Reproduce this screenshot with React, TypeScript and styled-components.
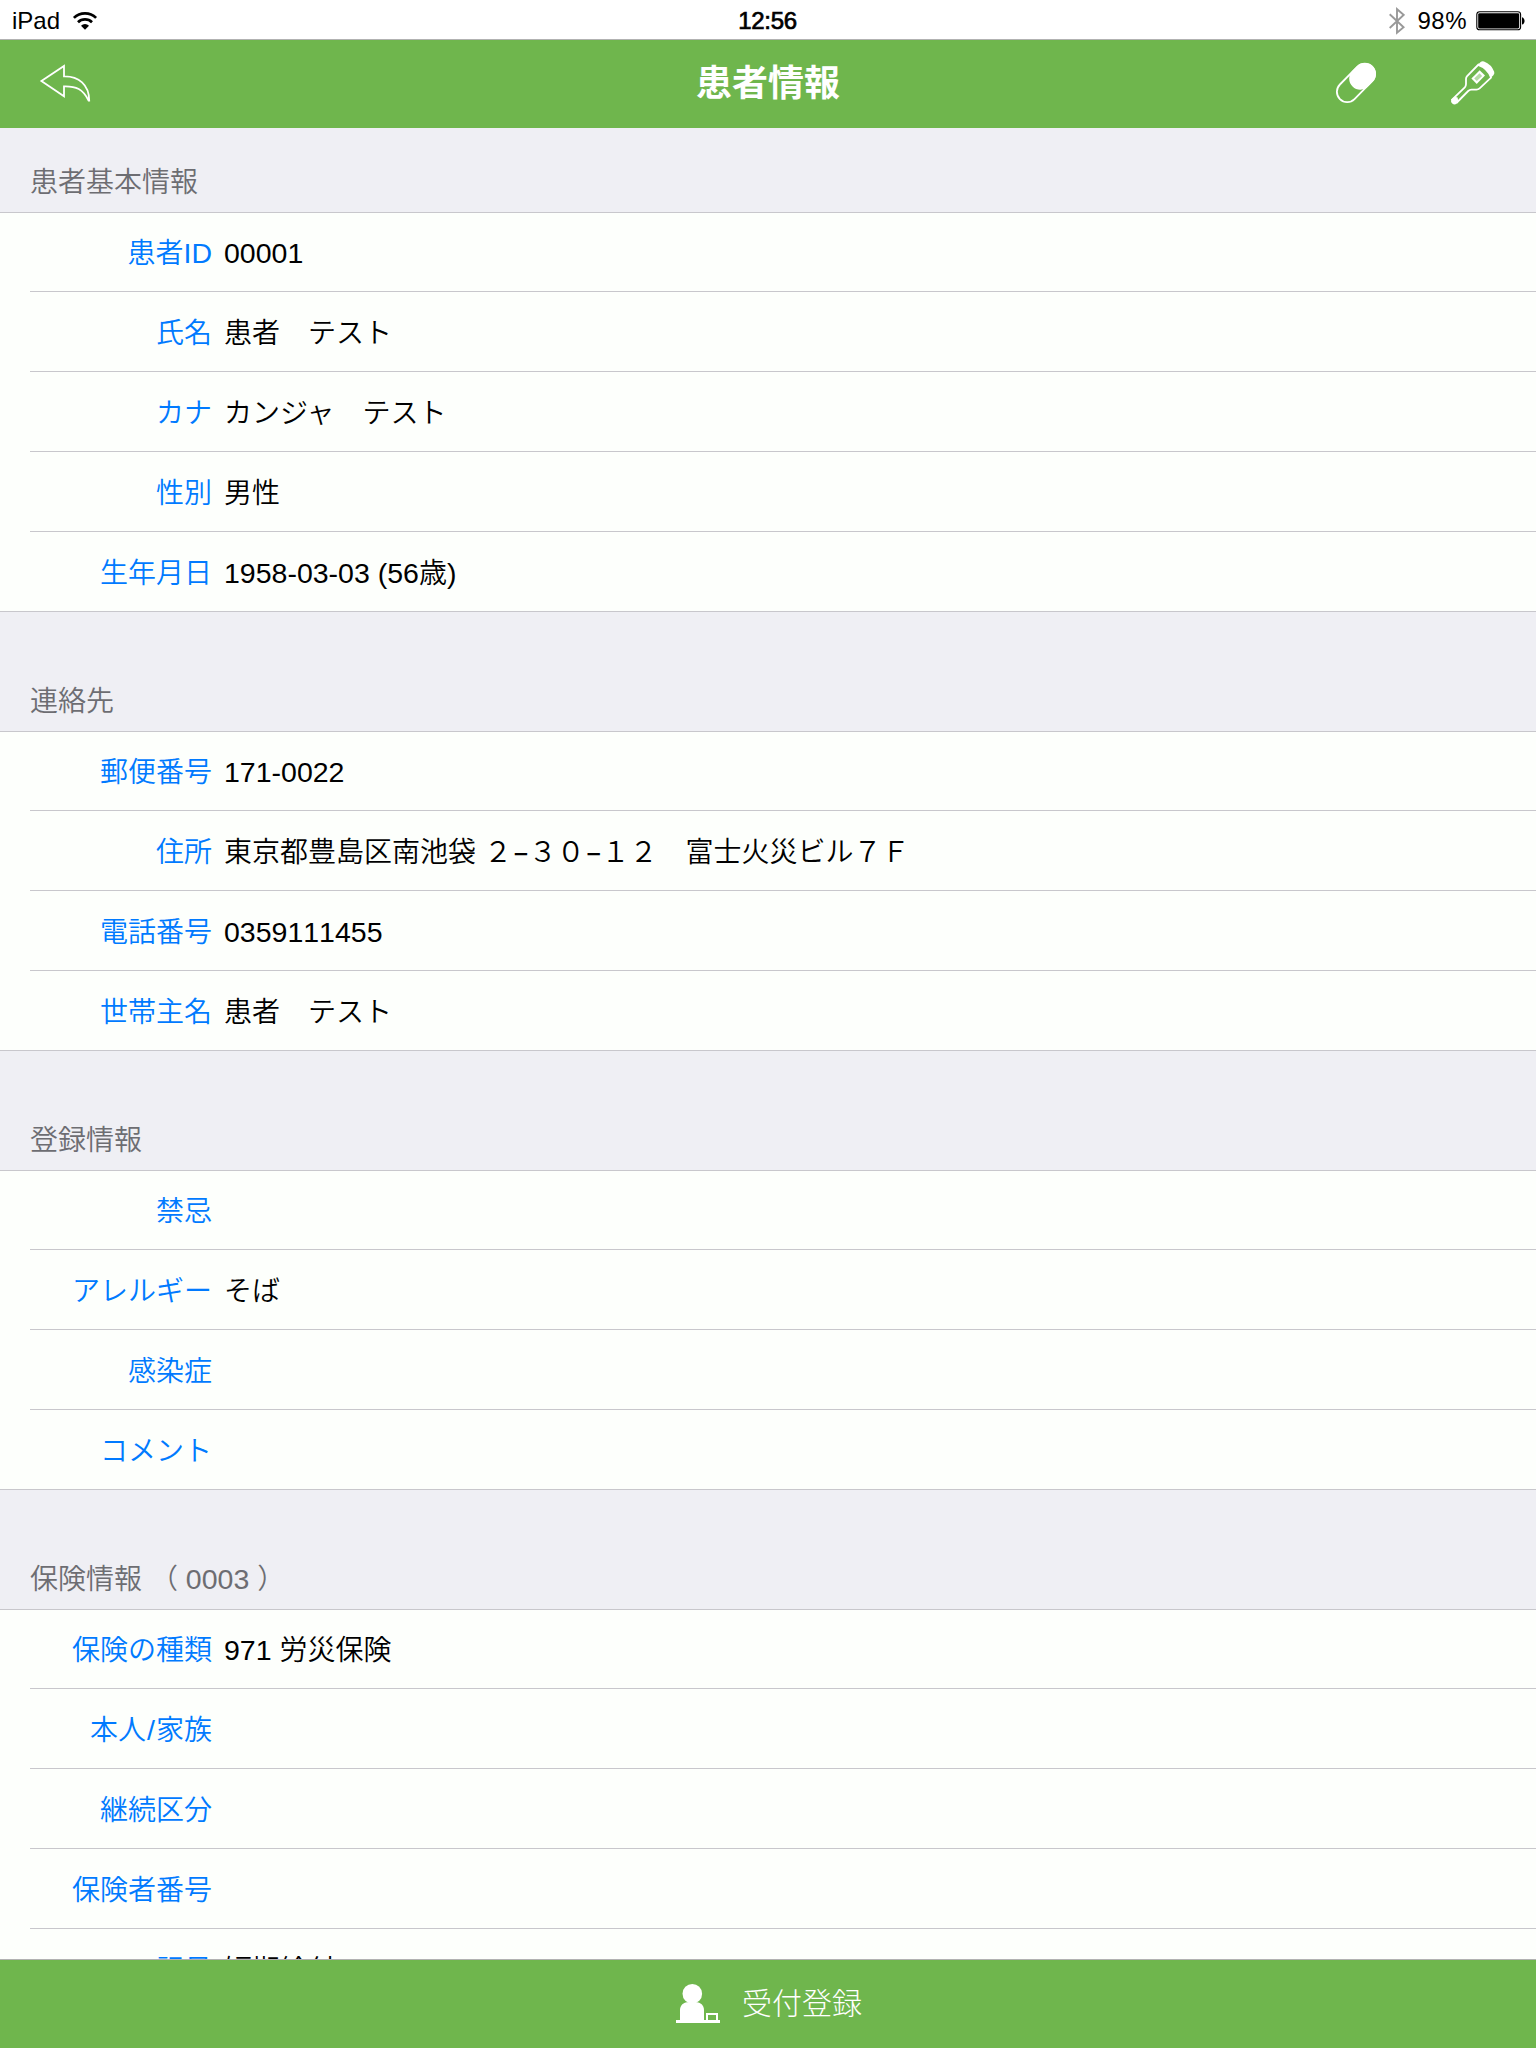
import React from "react";
import styled, { createGlobalStyle } from "styled-components";

const GREEN = "#6fb64d";
const LINE = "#c8c7cc";

const GlobalStyle = createGlobalStyle`
  html, body { margin: 0; padding: 0; background: #efeff4; }
  body { font-family: "Liberation Sans", "Noto Sans CJK JP", sans-serif; }
`;

const Screen = styled.div`
  display: flex;
  flex-direction: column;
  width: 1536px;
  height: 2048px;
  overflow: hidden;
  background: #efeff4;
`;

const StatusBar = styled.header`
  display: grid;
  grid-template-columns: 1fr auto 1fr;
  align-items: center;
  flex: none;
  box-sizing: border-box;
  height: 40px;
  padding: 0 11px 0 12px;
  background: #fff;
  border-bottom: 1px solid #b2b2b2;
  font-size: 24px;
  line-height: 40px;
  color: #000;
`;

const StatusGroup = styled.div<{ $end?: boolean }>`
  display: flex;
  align-items: center;
  justify-content: ${(p) => (p.$end ? "flex-end" : "flex-start")};
  height: 40px;
  padding-top: 1px;
  svg { display: block; }
`;

const DeviceName = styled.span`
  margin-right: 12px;
`;

const Clock = styled.span`
  padding: 1px 2px 0 0;
  letter-spacing: -0.3px;
  -webkit-text-stroke: 0.7px #000;
`;

const Percent = styled.span`
  margin: 0 9px 0 12px;
  letter-spacing: 0.5px;
`;

const NavBar = styled.nav`
  display: grid;
  grid-template-columns: 1fr auto 1fr;
  align-items: center;
  flex: none;
  height: 88px;
  padding: 0 40px 0 38px;
  background: ${GREEN};
`;

const NavTitle = styled.h1`
  margin: 0;
  padding-left: 2px;
  font-size: 36px;
  font-weight: 700;
  line-height: 88px;
  color: #fff;
`;

const NavActions = styled.div`
  display: flex;
  justify-content: flex-end;
  align-items: center;
  gap: 70px;
`;

const IconButton = styled.button`
  display: block;
  justify-self: start;
  padding: 0 0 2px;
  border: 0;
  background: none;
  svg { display: block; }
`;

const Content = styled.main`
  flex: 1;
  min-height: 0;
  overflow: hidden;
`;

const SectionHeader = styled.h2<{ $first?: boolean }>`
  display: flex;
  align-items: flex-end;
  box-sizing: border-box;
  height: ${(p) => (p.$first ? 84 : 119)}px;
  margin: 0;
  padding: 0 30px 9px;
  font-size: 28px;
  font-weight: 350;
  line-height: 40px;
  color: #6d6d72;
  white-space: pre;
`;

const Table = styled.div`
  background: #fdfffc;
  border-top: 1px solid ${LINE};
  border-bottom: 1px solid ${LINE};
`;

const Row = styled.div`
  display: flex;
  align-items: flex-end;
  box-sizing: border-box;
  height: 80px;
  margin-left: 30px;
  padding-bottom: 17px;
  border-bottom: 1px solid ${LINE};
  font-size: 28px;
  font-weight: 350;
  line-height: 40px;
  &:first-child { height: 79px; }
  &:last-child { height: 79px; border-bottom: 0; }
`;

const Label = styled.div`
  width: 182px;
  flex: none;
  margin-right: 12px;
  text-align: right;
  color: #007aff;
  white-space: pre;
`;

const Value = styled.div`
  color: #000;
  white-space: pre;
`;

const Latin = styled.span`
  font-size: 28.5px;
  font-kerning: none;
  line-height: 1;
`;

const Slash = styled(Latin)`
  padding: 0 1px;
`;

const Minus = styled(Latin)`
  display: inline-block;
  width: 16.8px;
  font-family: "Inter", sans-serif;
  font-size: 27px;
  font-weight: 400;
  text-align: center;
`;

const BottomBar = styled.footer`
  display: flex;
  align-items: center;
  justify-content: center;
  flex: none;
  box-sizing: border-box;
  height: 89px;
  padding-left: 2px;
  border-top: 1px solid #b2b2b2;
  background: ${GREEN};
  color: #fff;
`;

const RegisterButton = styled.button`
  display: flex;
  align-items: center;
  gap: 22px;
  padding: 0;
  border: 0;
  background: none;
  font-family: inherit;
  font-size: 30px;
  font-weight: 300;
  line-height: 44px;
  color: #fff;
  svg { display: block; margin-bottom: 2px; }
`;

const WifiIcon = () => (
  <svg width="26" height="20" viewBox="0 0 26 20" fill="none" stroke="#000" strokeWidth="2.7">
    <path d="M1.9 6.9A15.8 15.8 0 0 1 24.1 6.9" />
    <path d="M6 11.2A10 10 0 0 1 20 11.2" />
    <path d="M9 14.7A5.8 5.8 0 0 1 17 14.7L13 18.8Z" fill="#000" stroke="none" />
  </svg>
);

const BluetoothIcon = () => (
  <svg width="16" height="28" viewBox="0 0 16 28" fill="none" stroke="#999" strokeWidth="1.9">
    <path d="M.7 7.3L14.6 20.2L8 25.7V2.2L14.6 7.9L.7 21" />
  </svg>
);

const BatteryIcon = () => (
  <svg width="49" height="20" viewBox="0 0 49 20">
    <rect x="0.8" y="0.8" width="43.8" height="18" rx="2.8" fill="none" stroke="#000" strokeWidth="1.1" />
    <rect x="2.2" y="2.2" width="41" height="15.2" rx="1.4" fill="#000" />
    <path d="M46 6.2C49.4 7 49.4 12.8 46 13.6Z" fill="#000" />
  </svg>
);

const BackIcon = () => (
  <svg width="54" height="42" viewBox="0 0 54 42" fill="none" stroke="#fff" strokeWidth="1.8">
    <path d="M3.4 19L26 3.9V14.3C40.5 14 51.2 22.5 51.2 38.6H50.6C45 27 38 24 26 24.3V34.3Z" />
  </svg>
);

const PillIcon = () => (
  <svg width="44" height="46" viewBox="0 0 44 46" fill="none" stroke="#fff">
    <path
      strokeWidth="1.8"
      d="M5.9 24.5L23.5 6.6A10.3 10.3 0 0 1 38.1 21.2L20.5 39.1A10.3 10.3 0 0 1 5.9 24.5Z"
    />
    <path strokeWidth="22.2" strokeLinecap="round" d="M26.3 18.6L30.8 14" />
  </svg>
);

const ThermometerIcon = () => (
  <svg width="48" height="50" viewBox="0 0 48 50" fill="none" stroke="#fff" strokeWidth="1.8">
    <path d="M31 6L18.9 18.3Q18 19.3 18 21V26Q18 28 16.8 29.3L3.6 42.2M43.6 19.2L31.6 30.4Q30.3 31.6 28.5 31.6H23.5Q21.6 31.6 20.2 33L8.4 45" />
    <path d="M29.2 7.6L32.6 4.1Q34 2.7 36 3.4Q43.5 6.2 46.2 13.8Q46.8 15.6 45.4 17.2L42.4 20.3Q39.2 11 29.2 7.6Z" fill="#fff" stroke="none" />
    <path d="M31.7 12.3L37 17.6L28.7 25.9L23.4 20.6Z" fill="#fff" stroke="none" />
    <path d="M31.5 15.2L34.2 17.9L28.8 23.1L26.2 20.5Z" fill="#b7dba6" stroke="none" />
    <path d="M3.2 41.5L6.8 38.8L9.6 39.6L10.3 43.2L8.3 46A3.7 3.7 0 0 1 3.2 41.5Z" fill="#fff" stroke="none" />
  </svg>
);

const ReceptionIcon = () => (
  <svg width="44" height="42" viewBox="0 0 44 42" fill="#fff">
    <circle cx="16.3" cy="11.7" r="9.8" />
    <path d="M4 38.5V28C4 23.4 7.2 20.6 11 20.2H21C24.8 20.6 28 23.4 28 28V38.5Z" />
    <rect x="0" y="38" width="44" height="3" />
    <rect x="31" y="32" width="10" height="7" fill="none" stroke="#fff" strokeWidth="2" />
  </svg>
);

/* ASCII runs are set a touch larger than the kana and kanji around them. */
const Mixed = ({ text }: { text: string }) => (
  <>
    {text
      .split(/(\u2212|[\x20-\x7e]+)/)
      .filter(Boolean)
      .map((part, i) => {
        if (part === "\u2212") return <Minus key={i}>{part}</Minus>;
        if (part === "/") return <Slash key={i}>{part}</Slash>;
        return /^[\x20-\x7e]/.test(part) ? <Latin key={i}>{part}</Latin> : part;
      })}
  </>
);

type Section = { title: string; rows: [string, string][] };

const sections: Section[] = [
  {
    title: "患者基本情報",
    rows: [
      ["患者ID", "00001"],
      ["氏名", "患者　テスト"],
      ["カナ", "カンジャ　テスト"],
      ["性別", "男性"],
      ["生年月日", "1958-03-03 (56歳)"],
    ],
  },
  {
    title: "連絡先",
    rows: [
      ["郵便番号", "171-0022"],
      ["住所", "東京都豊島区南池袋 ２−３０−１２　富士火災ビル７Ｆ"],
      ["電話番号", "0359111455"],
      ["世帯主名", "患者　テスト"],
    ],
  },
  {
    title: "登録情報",
    rows: [
      ["禁忌", ""],
      ["アレルギー", "そば"],
      ["感染症", ""],
      ["コメント", ""],
    ],
  },
  {
    title: "保険情報 （ 0003 ）",
    rows: [
      ["保険の種類", "971 労災保険"],
      ["本人/家族", ""],
      ["継続区分", ""],
      ["保険者番号", ""],
      ["記号", "短期給付"],
    ],
  },
];

export default function App() {
  return (
    <Screen lang="ja">
      <GlobalStyle />
      <StatusBar>
        <StatusGroup>
          <DeviceName>iPad</DeviceName>
          <WifiIcon />
        </StatusGroup>
        <Clock>12:56</Clock>
        <StatusGroup $end>
          <BluetoothIcon />
          <Percent>98%</Percent>
          <BatteryIcon />
        </StatusGroup>
      </StatusBar>
      <NavBar>
        <IconButton aria-label="戻る">
          <BackIcon />
        </IconButton>
        <NavTitle>患者情報</NavTitle>
        <NavActions>
          <IconButton aria-label="薬">
            <PillIcon />
          </IconButton>
          <IconButton aria-label="体温">
            <ThermometerIcon />
          </IconButton>
        </NavActions>
      </NavBar>
      <Content>
        {sections.map((section, i) => (
          <section key={section.title}>
            <SectionHeader $first={i === 0}>
              <span>
                <Mixed text={section.title} />
              </span>
            </SectionHeader>
            <Table>
              {section.rows.map(([label, value]) => (
                <Row key={label}>
                  <Label>
                    <Mixed text={label} />
                  </Label>
                  <Value>
                    <Mixed text={value} />
                  </Value>
                </Row>
              ))}
            </Table>
          </section>
        ))}
      </Content>
      <BottomBar>
        <RegisterButton>
          <ReceptionIcon />
          受付登録
        </RegisterButton>
      </BottomBar>
    </Screen>
  );
}
